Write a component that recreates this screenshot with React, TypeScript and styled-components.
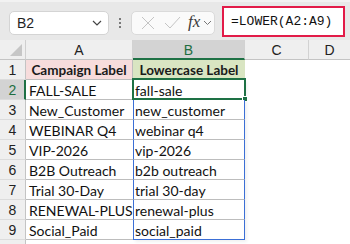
import React from "react";
import styled, { createGlobalStyle, css } from "styled-components";

const Global = createGlobalStyle`
  html, body { margin: 0; padding: 0; background: #ffffff; }
  body { font-family: Lato, "Liberation Sans", sans-serif; }
  * { box-sizing: border-box; }
`;

const Page = styled.div`
  width: 350px;
  height: 244px;
  overflow: hidden;
  background: #ffffff;
  display: flex;
  flex-direction: column;
`;

const Toolbar = styled.div`
  height: 40px;
  flex: none;
  background: #e8e8e8;
  border-top: 2px solid #f2f2f2;
  display: flex;
  align-items: center;
  padding: 0 5px 0 9px;
`;

const NameBox = styled.div`
  width: 100px;
  height: 24px;
  background: #ffffff;
  border: 1px solid #d4d4d4;
  border-radius: 5px;
  display: flex;
  align-items: center;
  justify-content: space-between;
  padding: 0 6px 0 7px;
  font-family: "Liberation Sans", sans-serif;
  font-size: 14px;
  color: #1f1f1f;
  margin-top: 3px;
`;

const Dots = styled.div`
  width: 22px;
  display: flex;
  flex-direction: column;
  align-items: center;
  gap: 2px;
  margin-top: 3px;
  span {
    width: 2px;
    height: 2px;
    background: #555;
    border-radius: 1px;
  }
`;

const FxBox = styled.div`
  width: 84px;
  height: 24px;
  background: #fafafa;
  border: 1px solid #dadada;
  border-radius: 5px;
  display: flex;
  align-items: center;
  padding: 0 0 0 4px;
  margin-top: 3px;
`;

const Fx = styled.span`
  font-family: "Liberation Serif", serif;
  font-style: italic;
  font-size: 17px;
  color: #3a3a3a;
  margin: 0 3px 2px 4px;
`;

const FormulaInput = styled.div`
  margin-left: 7px;
  flex: 1;
  height: 31px;
  background: #ffffff;
  border: 2.5px solid #e21b48;
  display: flex;
  align-items: center;
  padding-left: 7px;
  font-family: "Liberation Mono", monospace;
  font-size: 13px;
  color: #111;
  margin-top: 1px;
`;

const Grid = styled.div`
  display: grid;
  grid-template-columns: 26px 107px 112px 64px 1fr;
  grid-auto-rows: 20px;
`;

const Corner = styled.div`
  background: #efefef;
  border-right: 1px solid #cfcfcf;
  border-bottom: 1px solid #c4c4c4;
  display: flex;
  align-items: flex-end;
  justify-content: flex-end;
  padding: 0 3px 3px 0;
`;

const ColHead = styled.div<{ $sel?: boolean; $last?: boolean }>`
  background: ${(p) => (p.$sel ? "#d3d3d3" : "#efefef")};
  border-right: ${(p) => (p.$last ? "none" : "1px solid #d2d2d2")};
  border-bottom: ${(p) => (p.$sel ? "2px solid #1e7145" : "1px solid #c4c4c4")};
  color: ${(p) => (p.$sel ? "#1e6e3f" : "#222")};
  font-family: "Liberation Sans", sans-serif;
  font-size: 14px;
  display: flex;
  align-items: center;
  justify-content: center;
  padding-top: ${(p) => (p.$sel ? "1px" : "0")};
`;

const RowHead = styled.div<{ $sel?: boolean }>`
  background: ${(p) => (p.$sel ? "#d3d3d3" : "#efefef")};
  border-right: ${(p) => (p.$sel ? "2px solid #1e7145" : "1px solid #c4c4c4")};
  border-bottom: 1px solid #dcdcdc;
  color: ${(p) => (p.$sel ? "#1e6e3f" : "#222")};
  font-family: "Liberation Sans", sans-serif;
  font-size: 14px;
  display: flex;
  align-items: center;
  justify-content: center;
  padding-left: ${(p) => (p.$sel ? "1px" : "0")};
`;

type CellProps = {
  $bg?: string;
  $bold?: boolean;
  $spill?: boolean;
  $spillEnd?: boolean;
  $noRight?: boolean;
};

const Cell = styled.div<CellProps>`
  position: relative;
  background: ${(p) => p.$bg || "#ffffff"};
  border-bottom: 1px solid #bdbdbd;
  border-right: 1px solid #bdbdbd;
  font-size: 14px;
  color: #111;
  display: flex;
  align-items: center;
  padding: 1px 0 0 3px;
  white-space: nowrap;
  overflow: visible;
  ${(p) =>
    p.$bold &&
    css`
      font-weight: 700;
      font-size: 13.5px;
      justify-content: center;
      padding-left: 0;
      color: #1a1a1a;
    `}
  ${(p) =>
    p.$noRight &&
    css`
      border-right: none;
    `}
  ${(p) =>
    p.$spill &&
    css`
      border-left: 1px solid #3b6fd6;
      border-right: 1px solid #3b6fd6;
      padding-left: 1px;
      box-shadow: 2px 2px 3px rgba(0, 0, 0, 0.06);
    `}
  ${(p) =>
    p.$spillEnd &&
    css`
      border-bottom: 1px solid #3b6fd6;
    `}
`;

const Empty = styled.div`
  background: #ffffff;
`;

const ActiveFrame = styled.div`
  position: absolute;
  left: -2px;
  top: -2px;
  right: -2px;
  bottom: -1px;
  border: 2px solid #1e7145;
  pointer-events: none;
`;

const FillHandle = styled.div`
  position: absolute;
  right: -4px;
  bottom: -4px;
  width: 6px;
  height: 6px;
  background: #1e7145;
  border: 1px solid #ffffff;
`;

const Chevron = () => (
  <svg width="10" height="6" viewBox="0 0 10 6">
    <path d="M1 1 L5 5 L9 1" fill="none" stroke="#444" strokeWidth="1.2" />
  </svg>
);

const SmallChevron = () => (
  <svg width="9" height="6" viewBox="0 0 9 6">
    <path d="M1 1 L4.5 4.5 L8 1" fill="none" stroke="#777" strokeWidth="1" />
  </svg>
);

const Cross = () => (
  <svg width="24" height="14" viewBox="0 0 24 14">
    <path d="M6 1 L18 13 M18 1 L6 13" stroke="#c4c4c4" strokeWidth="1" fill="none" />
  </svg>
);

const Check = () => (
  <svg width="24" height="14" viewBox="0 0 24 14">
    <path d="M5 7 L10 12 L20 1" stroke="#c4c4c4" strokeWidth="1" fill="none" />
  </svg>
);

const Triangle = () => (
  <svg width="12" height="12" viewBox="0 0 12 12">
    <path d="M12 0 L12 12 L0 12 Z" fill="#c6c6c6" />
  </svg>
);

const rows: [string, string][] = [
  ["FALL-SALE", "fall-sale"],
  ["New_Customer", "new_customer"],
  ["WEBINAR Q4", "webinar q4"],
  ["VIP-2026", "vip-2026"],
  ["B2B Outreach", "b2b outreach"],
  ["Trial 30-Day", "trial 30-day"],
  ["RENEWAL-PLUS", "renewal-plus"],
  ["Social_Paid", "social_paid"],
];

export default function App() {
  return (
    <Page>
      <Global />
      <Toolbar>
        <NameBox>
          <span>B2</span>
          <Chevron />
        </NameBox>
        <Dots>
          <span />
          <span />
          <span />
        </Dots>
        <FxBox>
          <Cross />
          <Check />
          <Fx>fx</Fx>
          <SmallChevron />
        </FxBox>
        <FormulaInput>=LOWER(A2:A9)</FormulaInput>
      </Toolbar>
      <Grid>
        <Corner>
          <Triangle />
        </Corner>
        <ColHead>A</ColHead>
        <ColHead $sel>B</ColHead>
        <ColHead>C</ColHead>
        <ColHead $last>D</ColHead>

        <RowHead>1</RowHead>
        <Cell $bg="#f7dcdc" $bold>
          Campaign Label
        </Cell>
        <Cell $bg="#d9e5c2" $bold $noRight>
          Lowercase Label
        </Cell>
        <Empty />
        <Empty />

        {rows.map(([a, b], i) => {
          const n = i + 2;
          const last = i === rows.length - 1;
          return (
            <React.Fragment key={n}>
              <RowHead $sel={n === 2}>{n}</RowHead>
              <Cell $noRight>{a}</Cell>
              <Cell $spill $spillEnd={last}>
                {b}
                {n === 2 && (
                  <ActiveFrame>
                    <FillHandle />
                  </ActiveFrame>
                )}
              </Cell>
              <Empty />
              <Empty />
            </React.Fragment>
          );
        })}
        <RowHead />
        <Empty />
        <Empty />
        <Empty />
        <Empty />
      </Grid>
    </Page>
  );
}
